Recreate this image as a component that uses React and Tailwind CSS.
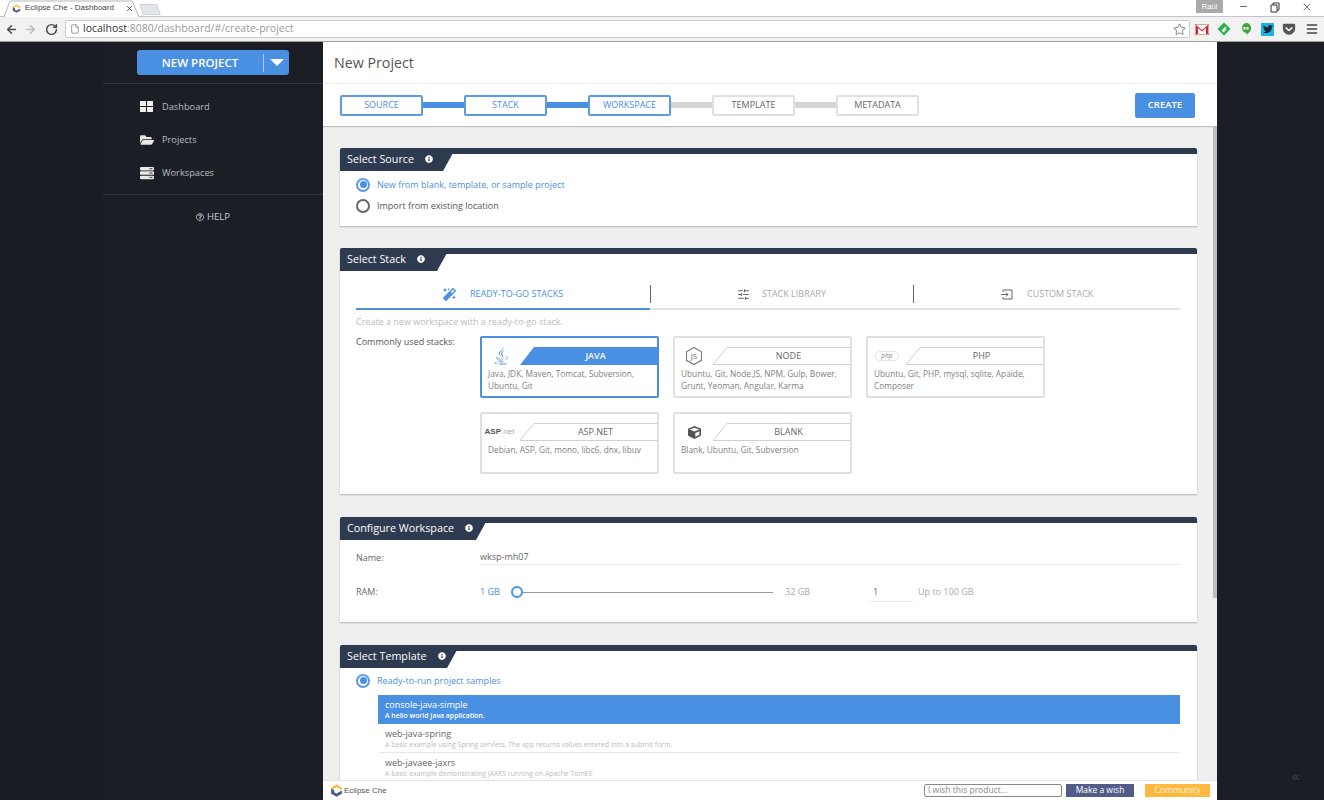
import React from "react";
import { ArrowLeft, ArrowRight, RotateCw, File, Star, Menu, X, Minus, SlidersHorizontal, ChevronsLeft } from "lucide-react";
import { FaFolderOpen, FaServer, FaInfoCircle, FaMagic, FaJava, FaCube, FaRegQuestionCircle, FaTwitter, FaGetPocket } from "react-icons/fa";

function CheLogo({ size = 12 }) {
  return (
    <svg width={size} height={size} viewBox="0 0 24 24">
      <path d="M12 1 L22 7 L22 11 L15 7.5 L12 6 L7 9 L2 6.5 Z" fill="#fdb940" />
      <path d="M2 8 L8 11.5 L8 15 L12 17.5 L22 12 L22 18 L12 23.5 L2 18 Z" fill="#525c86" />
    </svg>
  );
}

function Step({ label, done, line }) {
  return (
    <>
      <div className={`w-[83px] h-[21px] flex items-center justify-center text-[9px] rounded-[2px] border-2 ${done ? "border-[#5b9be6] text-[#4a90e2]" : "border-[#e0e0e0] text-[#666]"}`}>
        {label}
      </div>
      {line && <div className={`w-[41px] h-[6px] ${line === "on" ? "bg-[#4a90e2]" : "bg-[#d4d4d4]"}`} />}
    </>
  );
}

function Panel({ title, labelW, className, children }) {
  return (
    <section className={`bg-white border-t-[6px] border-[#2e3a50] rounded-t-[2px] shadow-[0_1px_2px_rgba(0,0,0,0.25)] ${className}`}>
      <div className={`${labelW} h-[18px] -mt-[1px] pl-[7px] pb-[6px] flex items-center gap-[11px] bg-[#2e3a50] text-white text-[10.75px] [clip-path:polygon(0_0,100%_0,calc(100%-10px)_100%,0_100%)]`}>
        <span>{title}</span>
        <FaInfoCircle size={8} />
      </div>
      {children}
    </section>
  );
}

function Radio({ on, label }) {
  return (
    <div className="flex items-center h-[21px] pl-[16px] gap-[7px]">
      <span className={`w-[14px] h-[14px] rounded-full border-2 flex items-center justify-center ${on ? "border-[#5b9be6]" : "border-[#666]"}`}>
        {on && <span className="w-[7px] h-[7px] rounded-full bg-[#4a90e2]" />}
      </span>
      <span className={`text-[9px] ${on ? "text-[#4a90e2]" : "text-[#555]"}`}>{label}</span>
    </div>
  );
}

function StackCard({ name, desc, icon, active }) {
  return (
    <div className={`h-[62px] rounded-[2px] border-2 ${active ? "border-[#4a90e2]" : "border-[#e0e0e0]"} bg-white`}>
      <div className="flex h-[18px] mt-[9px]">
        <div className="w-[38px] flex items-center justify-center shrink-0">{icon}</div>
        <div className="relative flex-1 flex items-center justify-center text-[9px]">
          {active ? (
            <div className="absolute inset-0 bg-[#4a90e2] [clip-path:polygon(14px_0,100%_0,100%_100%,0_100%)]" />
          ) : (
            <svg className="absolute inset-0 w-full h-full" preserveAspectRatio="none">
              <path d="M0 17.5 L14 0.5 L400 0.5 M0 17.5 L400 17.5" fill="none" stroke="#d0d0d0" strokeWidth="1" />
            </svg>
          )}
          <span className={`relative pl-[14px] ${active ? "text-white font-semibold" : "text-[#666]"}`}>{name}</span>
        </div>
      </div>
      <p className="mt-[3px] px-[6px] text-[8.3px] leading-[12px] text-[#808080]">{desc}</p>
    </div>
  );
}

function TemplateRow({ name, desc, active }) {
  return (
    <div className={`h-[29px] px-[7px] pt-[4px] border-b ${active ? "bg-[#4a90e2] border-[#4a90e2] text-white" : "border-[#e8e8e8] bg-white"}`}>
      <div className={`text-[9px] leading-[12px] ${active ? "" : "text-[#666]"}`}>{name}</div>
      <div className={`text-[6.9px] leading-[10px] ${active ? "font-semibold" : "text-[#bbb]"}`}>{desc}</div>
    </div>
  );
}

function NavItem({ icon, label }) {
  return (
    <div className="h-[33px] flex items-center pl-[37px] text-[#b8bcc4] text-[9.25px]">
      <span className="w-[22px] text-[#e8e8e8] flex">{icon}</span>
      {label}
    </div>
  );
}

export default function App() {
  return (
    <div className="w-[1324px] h-[800px] overflow-hidden flex flex-col bg-[#1b1e25] font-['Open_Sans',sans-serif]">
      {/* browser chrome */}
      <div className="h-[42px] shrink-0 bg-white border-b border-[#9c9c9c] flex flex-col">
        <div className="h-[17px] flex items-end border-b border-[#c4c4c4] relative">
          <div className="relative w-[136px] h-[16px] ml-[4px] flex items-center pl-[8px] text-[8px] text-[#444] font-['Liberation_Sans',sans-serif]">
            <svg className="absolute inset-0" width="136" height="17">
              <path d="M0 17 L6 1 L128 1 L135 17" fill="#fff" stroke="#b5b5b5" />
            </svg>
            <span className="relative mr-[4px]"><CheLogo size={9} /></span>
            <span className="relative">Eclipse Che - Dashboard</span>
            <X size={9} strokeWidth={2.5} className="absolute left-[121px] top-[4px] text-[#555]" />
          </div>
          <div className="ml-[1px] mb-[1px] w-[18px] h-[11px] bg-[#e2e5ea] border border-[#cfd2d8] skew-x-[20deg] rounded-[1px]" />
          <div className="ml-auto self-start flex items-start h-[14px] text-[#333]">
            <div className="w-[27px] h-[13px] bg-[#aaa] text-white text-[7.5px] flex items-center justify-center font-['Liberation_Sans',sans-serif]">Raúl</div>
            <div className="w-[101px] flex justify-between pl-[15px] pr-[11px] pt-[1px]">
              <Minus size={11} strokeWidth={1.5} />
              <svg width="10" height="11" viewBox="0 0 10 11" className="mt-[1px]"><path d="M1 3 H7 V10 H1 Z M3 3 V1 H9 V8 H7" fill="none" stroke="#333" /></svg>
              <X size={12} strokeWidth={1.3} />
            </div>
          </div>
        </div>
        <div className="flex-1 flex items-center bg-[#f2f2f2] pl-[4px] pr-[4px]">
          <ArrowLeft size={13} strokeWidth={2.75} className="text-[#4a4a4a] mr-[6px] ml-[1px]" />
          <ArrowRight size={13} strokeWidth={2.75} className="text-[#bbb] mr-[8px]" />
          <RotateCw size={13} strokeWidth={2.75} className="text-[#4a4a4a] mr-[7px]" />
          <div className="w-[1125px] h-[18px] bg-white border border-[#ccc] rounded-[2px] flex items-center pl-[4px] pr-[3px] text-[10.5px]">
            <File size={10} className="text-[#888] mr-[3px]" />
            <span className="text-[#333]">localhost</span>
            <span className="text-[#999]">:8080/dashboard/#/create-project</span>
            <Star size={13} className="ml-auto text-[#999]" />
          </div>
          <div className="flex items-center gap-[8px] ml-[5px]">
            <svg width="14" height="11" viewBox="0 0 14 11"><rect width="14" height="11" fill="#fff" stroke="#d33" /><path d="M1 1 L7 6 L13 1 V10 H11 V4 L7 7.5 L3 4 V10 H1 Z" fill="#d8232a" /></svg>
            <svg width="14" height="14" viewBox="0 0 14 14"><path d="M7 0.5 L13.5 7 L7 13.5 L0.5 7 Z" fill="#2bb24c" /><path d="M5 9 L9 5 M6 10 L9 7" stroke="#fff" strokeWidth="1.3" /></svg>
            <svg width="14" height="14" viewBox="0 0 14 14"><path d="M7 1 A5.2 5.2 0 0 1 12.2 6 C12.2 9 9.5 11 7.5 13 V11 A5.1 5.1 0 0 1 7 1 Z" fill="#3fa43f" /><path d="M4.5 5 H6.5 V7.5 H4.5 Z M7.5 5 H9.5 V7.5 H7.5 Z" fill="#fff" /></svg>
            <div className="w-[13px] h-[13px] bg-[#1ab2e8] flex items-center justify-center"><FaTwitter size={10} className="text-[#1b2733]" /></div>
            <FaGetPocket size={14} className="text-[#555]" />
            <Menu size={14} strokeWidth={2.5} className="text-[#444] ml-[1px]" />
          </div>
        </div>
      </div>

      <div className="flex-1 flex min-h-0">
        {/* left rail */}
        <div className="w-[103px] shrink-0 bg-[#191c24]" />
        <nav className="w-[220px] shrink-0 bg-[#1c1e25]">
          <div className="h-[42px] border-b border-[#33363d] pt-[8px] pl-[34px]">
            <div className="w-[152px] h-[25px] bg-[#4a90e2] rounded-[3px] flex items-center text-white">
              <span className="w-[126px] text-center text-[11.5px] font-semibold">NEW PROJECT</span>
              <span className="h-[18px] w-[1px] bg-[#a8ccf2]" />
              <svg width="14" height="7" viewBox="0 0 14 7" className="ml-[6px]"><path d="M0 0 H14 L7 7 Z" fill="#fff" /></svg>
            </div>
          </div>
          <div className="border-b border-[#33363d] h-[111px] pt-[6px]">
            <NavItem
              label="Dashboard"
              icon={<svg width="13" height="11" viewBox="0 0 13 11"><path d="M0 0 H6 V5 H0 Z M7 0 H13 V5 H7 Z M0 6 H6 V11 H0 Z M7 6 H13 V11 H7 Z" fill="#eee" /></svg>}
            />
            <NavItem label="Projects" icon={<FaFolderOpen size={14} />} />
            <NavItem label="Workspaces" icon={<FaServer size={14} />} />
          </div>
          <div className="mt-[15px] flex items-center justify-center gap-[3px] text-[9.5px] text-[#c8ccd2]">
            <FaRegQuestionCircle size={8} />
            HELP
          </div>
        </nav>

        {/* main column */}
        <main className="w-[894px] shrink-0 flex flex-col bg-[#efefef] relative">
          <header className="bg-white shrink-0 shadow-[0_1px_1px_rgba(0,0,0,0.2)]">
            <div className="h-[42px] border-b border-[#eee] pl-[11px] flex items-center text-[14.25px] text-[#555]">New Project</div>
            <div className="h-[42px] pl-[17px] pr-[22px] flex items-center">
              <Step label="SOURCE" done line="on" />
              <Step label="STACK" done line="on" />
              <Step label="WORKSPACE" done line="off" />
              <Step label="TEMPLATE" line="off" />
              <Step label="METADATA" />
              <button className="ml-auto w-[60px] h-[25px] bg-[#4a90e2] rounded-[2px] text-white text-[9.5px] font-semibold">CREATE</button>
            </div>
          </header>

          <div className="flex-1 min-h-0 overflow-hidden flex">
            <div className="w-[890px] pl-[17px] pr-[16px] pt-[22px]">
              <Panel title="Select Source" labelW="w-[113px]" className="h-[78px]">
                <div className="pt-[3px]">
                  <Radio on label="New from blank, template, or sample project" />
                  <Radio label="Import from existing location" />
                </div>
              </Panel>

              <Panel title="Select Stack" labelW="w-[107px]" className="h-[246px] mt-[22px]">
                <div className="ml-[16px] mr-[17px] mt-[12px] flex h-[27px] border-b-2 border-[#e4e4e4] text-[9px]">
                  <div className="w-[294px] -mb-[2px] border-b-2 border-[#4a90e2] flex items-center pl-[87px] gap-[14px] text-[#4a90e2] pb-[3px]">
                    <FaMagic size={13} />
                    READY-TO-GO STACKS
                  </div>
                  <div className="h-[18px] w-[1px] bg-[#666] mt-[2px]" />
                  <div className="w-[262px] flex items-center pl-[86px] gap-[12px] text-[#aaa] pb-[3px]">
                    <SlidersHorizontal size={13} className="text-[#666]" />
                    STACK LIBRARY
                  </div>
                  <div className="h-[18px] w-[1px] bg-[#666] mt-[2px]" />
                  <div className="flex items-center pl-[86px] gap-[14px] text-[#aaa] pb-[3px]">
                    <svg width="13" height="11" viewBox="0 0 13 11"><path d="M3 3 V1 H12 V10 H3 V8 M1 5.5 H8 M6 3.5 L8 5.5 L6 7.5" fill="none" stroke="#666" /></svg>
                    CUSTOM STACK
                  </div>
                </div>
                <p className="ml-[16px] mt-[6px] text-[9px] leading-[12px] text-[#bbb]">Create a new workspace with a ready-to-go stack.</p>
                <div className="ml-[16px] mt-[8px] flex">
                  <div className="w-[124px] text-[9px] leading-[12px] text-[#555]">Commonly used stacks:</div>
                  <div className="grid grid-cols-[179px_179px_179px] gap-x-[14px] gap-y-[14px]">
                    <StackCard active name="JAVA" desc="Java, JDK, Maven, Tomcat, Subversion, Ubuntu, Git" icon={<FaJava size={18} className="text-[#4a90e2]" />} />
                    <StackCard
                      name="NODE"
                      desc="Ubuntu, Git, Node.JS, NPM, Gulp, Bower, Grunt, Yeoman, Angular, Karma"
                      icon={
                        <span className="relative flex items-center justify-center w-[16px] h-[18px]">
                          <svg className="absolute inset-0" viewBox="0 0 15 17"><path d="M7.5 0.5 L14.5 4.5 V12.5 L7.5 16.5 L0.5 12.5 V4.5 Z" fill="none" stroke="#777" /></svg>
                          <span className="relative text-[8px] text-[#666]">JS</span>
                        </span>
                      }
                    />
                    <StackCard
                      name="PHP"
                      desc="Ubuntu, Git, PHP, mysql, sqlite, Apaide, Composer"
                      icon={<span className="border border-[#e4e4e4] rounded-full px-[5px] text-[6.5px] leading-[8px] italic text-[#888]">php</span>}
                    />
                    <StackCard
                      name="ASP.NET"
                      desc="Debian, ASP, Git, mono, libc6, dnx, libuv"
                      icon={<span className="text-[8px] font-['Liberation_Sans',sans-serif] -ml-[3px]"><b className="text-[#555]">ASP</b><span className="text-[#aaa]">.net</span></span>}
                    />
                    <StackCard name="BLANK" desc="Blank, Ubuntu, Git, Subversion" icon={<FaCube size={13} className="text-[#555]" />} />
                  </div>
                </div>
              </Panel>

              <Panel title="Configure Workspace" labelW="w-[146px]" className="h-[105px] mt-[23px]">
                <div className="ml-[16px] mr-[17px] mt-[10px] flex items-end h-[15px] text-[9px] text-[#666]">
                  <span className="w-[124px] leading-[12px] mb-[1px]">Name:</span>
                  <div className="flex-1 border-b border-[#e8e8e8] leading-[14px]">wksp-mh07</div>
                </div>
                <div className="ml-[16px] mt-[17px] flex items-center h-[20px] text-[9px] text-[#aaa]">
                  <span className="w-[124px] text-[#666]">RAM:</span>
                  <span className="w-[31px] text-[#4a90e2]">1 GB</span>
                  <span className="w-[12px] h-[12px] rounded-full border-2 border-[#4a90e2] bg-white shrink-0" />
                  <span className="w-[250px] h-[1px] bg-[#999]" />
                  <span className="w-[97px] pl-[12px]">32 GB</span>
                  <div className="w-[43px] h-[20px] border-b border-[#e8e8e8] pl-[3px] flex items-center text-[#666]">1</div>
                  <span className="pl-[5px]">Up to 100 GB</span>
                </div>
              </Panel>

              <Panel title="Select Template" labelW="w-[117px]" className="h-[200px] mt-[23px]">
                <div className="mt-[2px]">
                  <Radio on label="Ready-to-run project samples" />
                </div>
                <div className="ml-[38px] mr-[17px] mt-[4px]">
                  <TemplateRow active name="console-java-simple" desc="A hello world Java application." />
                  <TemplateRow name="web-java-spring" desc="A basic example using Spring servlets. The app returns values entered into a submit form." />
                  <TemplateRow name="web-javaee-jaxrs" desc="A basic example demonstrating JAXRS running on Apache TomEE" />
                </div>
              </Panel>
            </div>
            <div className="w-[4px] h-[472px] bg-[#bdbdbd]" />
          </div>

          <footer className="absolute bottom-0 left-0 right-0 h-[20px] bg-white border-t border-[#e4e4e4] flex items-center pl-[7px] pr-[7px]">
            <CheLogo size={13} />
            <span className="ml-[1px] text-[8px] text-[#555] font-['Liberation_Sans',sans-serif]">Eclipse Che</span>
            <div className="ml-auto w-[138px] h-[13px] border border-[#888] rounded-[2px] pl-[3px] flex items-center text-[8.5px] text-[#888]">I wish this product...</div>
            <div className="ml-[4px] w-[68px] h-[13px] bg-[#525c86] flex items-center justify-center text-[8.5px] text-white">Make a wish</div>
            <div className="ml-[11px] w-[65px] h-[13px] bg-[#fdb940] flex items-center justify-center text-[8.5px] text-[#fff3d8]">Community</div>
          </footer>
        </main>

        {/* right rail */}
        <div className="flex-1 bg-[#1b1e25] relative">
          <ChevronsLeft size={11} className="absolute right-[23px] bottom-[17px] text-[#55585f]" />
        </div>
      </div>
    </div>
  );
}
